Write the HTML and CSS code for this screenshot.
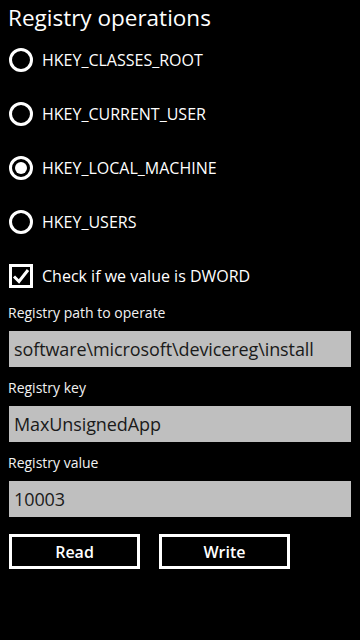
FILE: index.html
```html
<!DOCTYPE html>
<html>
<head>
<meta charset="utf-8">
<link rel="stylesheet" href="styles.css">
</head>
<body>
<div class="page">
  <h1 class="title">Registry operations</h1>
  <div class="options">
    <div class="opt"><span class="radio"></span><span class="opt-text">HKEY_CLASSES_ROOT</span></div>
    <div class="opt"><span class="radio"></span><span class="opt-text">HKEY_CURRENT_USER</span></div>
    <div class="opt"><span class="radio checked"></span><span class="opt-text">HKEY_LOCAL_MACHINE</span></div>
    <div class="opt"><span class="radio"></span><span class="opt-text">HKEY_USERS</span></div>
    <div class="opt">
      <span class="check">
        <svg width="18" height="18" viewBox="0 0 18 18"><path d="M2 9.5 L7 14.5 L16 3" fill="none" stroke="#fff" stroke-width="3" stroke-linejoin="miter" stroke-linecap="butt"/></svg>
      </span>
      <span class="opt-text">Check if we value is DWORD</span>
    </div>
  </div>
  <div class="fields">
    <div class="label first">Registry path to operate</div>
    <div class="box">software\microsoft\devicereg\install</div>
    <div class="label">Registry key</div>
    <div class="box">MaxUnsignedApp</div>
    <div class="label">Registry value</div>
    <div class="box">10003</div>
  </div>
  <div class="buttons">
    <div class="btn">Read</div>
    <div class="btn">Write</div>
  </div>
</div>
</body>
</html>
```
FILE: styles.css
```css
html, body {
  margin: 0;
  padding: 0;
  background: #000;
}
body {
  width: 360px;
  height: 640px;
  font-family: "Open Sans", "Noto Sans", sans-serif;
  color: #fff;
}
.page {
  display: flex;
  flex-direction: column;
}
.title {
  margin: 0;
  height: 33px;
  padding-left: 8px;
  font-size: 22.5px;
  font-weight: 400;
  line-height: 36px;
}
.options {
  display: flex;
  flex-direction: column;
}
.opt {
  height: 54px;
  display: flex;
  align-items: center;
  padding-left: 9px;
}
.radio {
  width: 24px;
  height: 24px;
  box-sizing: border-box;
  border: 3px solid #fff;
  border-radius: 50%;
  display: flex;
  align-items: center;
  justify-content: center;
  flex: none;
}
.radio.checked::after {
  content: "";
  width: 12px;
  height: 12px;
  border-radius: 50%;
  background: #fff;
}
.check {
  width: 24px;
  height: 24px;
  box-sizing: border-box;
  border: 3px solid #fff;
  display: flex;
  align-items: center;
  justify-content: center;
  flex: none;
}
.check svg {
  display: block;
}
.opt-text {
  margin-left: 9px;
  font-size: 16px;
  line-height: 20px;
}
.fields {
  display: flex;
  flex-direction: column;
  padding: 0 9px;
}
.label {
  font-size: 14px;
  line-height: 20px;
  margin-top: 11px;
  margin-left: -1px;
  color: #f2f2f2;
}
.label.first {
  margin-top: 0;
}
.box {
  margin-top: 8px;
  height: 36px;
  background: #bfbfbf;
  color: #1a1a1a;
  font-size: 18px;
  line-height: 36px;
  padding-left: 5px;
  letter-spacing: -0.1px;
  white-space: nowrap;
  overflow: hidden;
}
.buttons {
  display: flex;
  gap: 19px;
  padding-left: 9px;
  margin-top: 17px;
}
.btn {
  width: 131px;
  height: 35px;
  box-sizing: border-box;
  border: 3px solid #fff;
  display: flex;
  align-items: center;
  justify-content: center;
  font-size: 16px;
  font-weight: 600;
}
```
